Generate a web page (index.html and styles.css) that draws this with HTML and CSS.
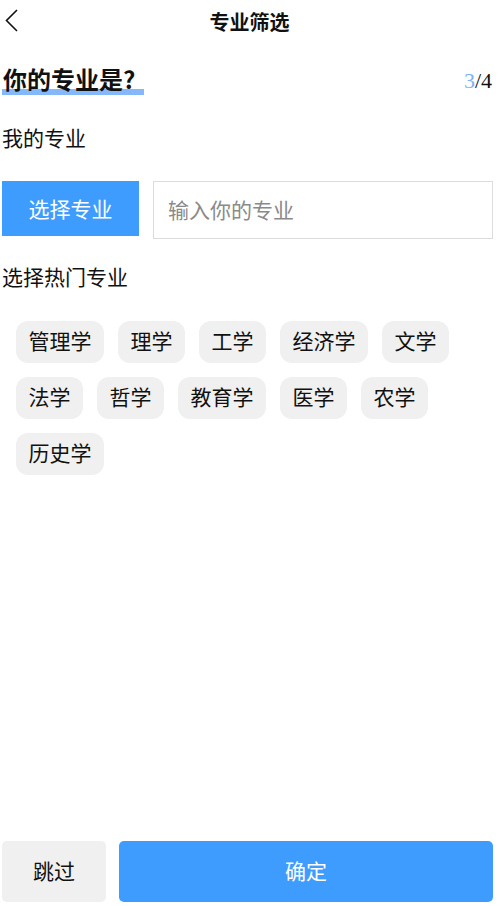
FILE: index.html
```html
<!DOCTYPE html>
<html lang="zh-CN">
<head>
<meta charset="utf-8">
<title>专业筛选</title>
<link rel="stylesheet" href="styles.css">
</head>
<body>
<div class="page">
  <header class="nav">
    <button class="back" aria-label="返回">
      <svg width="14" height="24" viewBox="0 0 14 24"><path d="M12 1 L1.5 11.5 L12 22" fill="none" stroke="#111" stroke-width="1.6"/></svg>
    </button>
    <h1 class="nav-title">专业筛选</h1>
  </header>

  <div class="question">
    <h2 class="q-title">你的专业是?</h2>
    <div class="step"><span class="cur">3</span>/4</div>
  </div>

  <div class="label">我的专业</div>

  <div class="pick-row">
    <button class="pick-btn">选择专业</button>
    <div class="input-box"><span class="placeholder">输入你的专业</span></div>
  </div>

  <div class="label hot-label">选择热门专业</div>

  <div class="tags">
    <span class="tag">管理学</span>
    <span class="tag">理学</span>
    <span class="tag">工学</span>
    <span class="tag">经济学</span>
    <span class="tag">文学</span>
    <span class="tag">法学</span>
    <span class="tag">哲学</span>
    <span class="tag">教育学</span>
    <span class="tag">医学</span>
    <span class="tag">农学</span>
    <span class="tag">历史学</span>
  </div>

  <footer class="actions">
    <button class="skip">跳过</button>
    <button class="confirm">确定</button>
  </footer>
</div>
</body>
</html>
```

FILE: styles.css
```css
* { box-sizing: border-box; }
html, body {
  margin: 0;
  padding: 0;
  background: #fff;
}
body {
  font-family: "Noto Sans CJK SC", "Noto Sans", sans-serif;
  color: #111;
}
.page {
  width: 491px;
  margin-left: 2px;
  height: 906px;
  display: flex;
  flex-direction: column;
  padding-bottom: 4px;
}
.nav {
  height: 44px;
  display: flex;
  align-items: center;
  justify-content: center;
  position: relative;
}
.back {
  position: absolute;
  left: 3px;
  top: 9px;
  width: 16px;
  height: 24px;
  padding: 0;
  border: 0;
  background: none;
  display: flex;
}
.nav-title {
  margin: 0 0 0 4px;
  font-size: 20px;
  font-weight: 700;
  line-height: 42px;
}
.question {
  display: flex;
  justify-content: space-between;
  align-items: center;
  margin-top: 15px;
  height: 44px;
}
.q-title {
  margin: 0;
  font-size: 24px;
  font-weight: 700;
  line-height: 30px;
  width: 142px;
  padding-left: 1px;
  white-space: nowrap;
  background: linear-gradient(to top, transparent 0, transparent 3px, #85b8fb 3px, #85b8fb 9px, transparent 9px);
  padding-bottom: 4px;
}
.step {
  font-family: "Liberation Serif", serif;
  font-size: 22px;
  color: #111;
  margin-right: 1px;
}
.cur { color: #7db2f7; }
.label {
  font-size: 21px;
  line-height: 28px;
  margin-top: 20px;
}
.pick-row {
  display: flex;
  gap: 14px;
  margin-top: 30px;
  height: 58px;
}
.pick-btn {
  width: 137px;
  height: 55px;
  border: 0;
  background: #3e9cff;
  color: #fff;
  font-family: inherit;
  font-size: 21px;
  padding: 0 0 2px;
}
.input-box {
  flex: 1;
  border: 1px solid #dcdcdc;
  display: flex;
  align-items: center;
  padding: 0 0 2px 14px;
}
.placeholder {
  color: #8a8a8a;
  font-size: 21px;
}
.hot-label { margin-top: 23px; }
.tags {
  display: flex;
  flex-wrap: wrap;
  gap: 14px;
  padding: 0 40px 0 14px;
  margin-top: 31px;
}
.tag {
  height: 42px;
  line-height: 39px;
  padding: 0 12.5px;
  background: #f0f0f0;
  border-radius: 12px;
  font-size: 21px;
  color: #111;
}
.actions {
  margin-top: auto;
  display: flex;
  gap: 13px;
  height: 61px;
}
.actions button {
  border: 0;
  border-radius: 5px;
  font-family: inherit;
  font-size: 21px;
  padding: 0 0 4px;
}
.skip {
  width: 104px;
  background: #f0f0f0;
  color: #111;
}
.confirm {
  flex: 1;
  background: #3e9cff;
  color: #fff;
}
```
